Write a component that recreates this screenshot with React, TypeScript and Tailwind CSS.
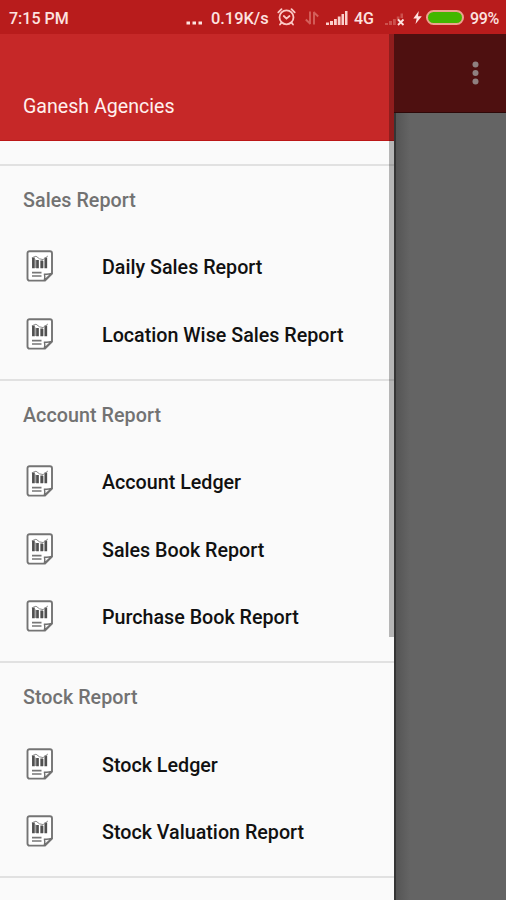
import React from 'react';

const sections = [
  { title: 'Sales Report', items: ['Daily Sales Report', 'Location Wise Sales Report'] },
  { title: 'Account Report', items: ['Account Ledger', 'Sales Book Report', 'Purchase Book Report'] },
  { title: 'Stock Report', items: ['Stock Ledger', 'Stock Valuation Report'] },
];

function ReportIcon() {
  return (
    <svg width="28" height="32" viewBox="0 0 28 32" fill="none" className="-mt-px shrink-0">
      <path d="M3.500 1.200H24a2 2 0 0 1 2 2v20.300l-7 7.100H3.500a2 2 0 0 1-2-2V3.200a2 2 0 0 1 2-2z" fill="#fff" stroke="#747474" strokeWidth="1.900" />
      <path d="M18.300 30.200c.8-2 .7-4 .1-6.100 2.400.4 4.600.2 7.200-.6z" fill="#f4f4f4" stroke="#707070" strokeWidth="1.400" strokeLinejoin="round" />
      <path d="M7.400 7.500v10.800M11.500 10v8.300M15.700 10.500v7.800M19.800 7.500v10.800" stroke="#505050" strokeWidth="2.700" />
      <path d="M9.500 9.500v8.500M17.800 11v7" stroke="#a5a5a5" strokeWidth="1" />
      <path d="M5.800 7.800L10 6.200l3.500 2.600 3.600.8 4.800-3.600" stroke="#8c8c8c" strokeWidth="1" />
      <path d="M6 22.600h9.500M6 26h9.500" stroke="#777" strokeWidth="1.600" />
    </svg>
  );
}

function AlarmIcon() {
  return (
    <svg width="20" height="20" viewBox="0 0 20 20" fill="none" stroke="#fbc9c5" strokeWidth="1.800" strokeLinecap="round">
      <circle cx="9.500" cy="10.300" r="7" />
      <path d="M1.300 5.300L4.500 2.200M17.700 5.300L14.500 2.200M4.500 15.700L3 17.500M14.500 15.700l1.500 1.800M6.800 9l2.700 2.600L12.500 9" />
    </svg>
  );
}

function SignalIcon() {
  return (
    <svg width="22" height="16" viewBox="0 0 22 16" fill="#fbd0cc">
      <path d="M0 12.500h3V15H0zM4 11h3v4H4zM8 9h2.800v6H8zM11.800 6.500h2.700V15h-2.700zM15.500 4h2.500v11h-2.500zM19 1h2.500v14H19z" />
    </svg>
  );
}

function StatusBar() {
  return (
    <div className="flex h-[34px] shrink-0 items-center bg-[#b81c1c] pt-[3px] pl-[9px] text-[16px] leading-none font-medium text-[#fde3e0]">
      <span className="w-[177px] whitespace-nowrap">7:15 PM</span>
      <svg width="18" height="16" viewBox="0 0 18 16" fill="#fde3e0">
        <path d="M.5 10.500H4v3H.5zM6.500 10.500H10v3H6.500zM12.500 10.500H16v3h-3.500z" />
      </svg>
      <span className="mt-px ml-[7px] w-[66px] text-[16.400px] whitespace-nowrap">0.19K/s</span>
      <div className="-mt-[3px] w-[28px]"><AlarmIcon /></div>
      <svg width="14" height="16" viewBox="0 0 14 16" fill="none" stroke="#d4605b" strokeWidth="1.900" className="-mt-px">
        <path d="M5 14V1.500M5.500 14L.8 9.500M9 2v12.500M8.500 2l4.700 4.500" />
      </svg>
      <div className="-mt-px ml-[7px]"><SignalIcon /></div>
      <span className="ml-[6px] w-[31px] text-[16px]">4G</span>
      <svg width="22" height="16" viewBox="0 0 22 16" className="-mt-px overflow-visible">
        <path d="M0 13h3v2H0zM4 11h3v4H4zM8 9h2.800v6H8zM11.800 6.500h2.700V10h-2.700zM15.500 3.500H18V8h-2.500z" fill="#cc514d" />
        <path d="M13 9.500l5.500 5.500M18.500 9.500L13 15" stroke="#fde3e0" strokeWidth="1.800" />
      </svg>
      <svg width="9" height="15" viewBox="0 0 9 15" fill="#fde3e0" className="-mt-[3px] ml-[6px]">
        <path d="M5.800 1L.3 8.500h3.400L2.500 14 8.800 6.200H5z" />
      </svg>
      <div className="-mt-[3px] ml-[4px] h-[15px] w-[38px] rounded-full border-2 border-[#eda18f] bg-[#42b700]" />
      <span className="ml-[6px] text-[16px] tracking-[-0.400px]">99%</span>
    </div>
  );
}

function Section({ title, items }: { title: string; items: string[] }) {
  return (
    <section className="border-t-2 border-[#e1e1e1] pb-[10.500px] font-medium">
      <h2 className="flex h-[67.500px] items-center pt-[3px] pl-[23px] text-[19.700px] tracking-[0.050px] text-[#727272]">{title}</h2>
      {items.map((item) => (
        <div key={item} className="flex h-[67.500px] items-center pl-[26px] text-[19.700px] text-[#111]">
          <ReportIcon />
          <span className="mt-[3px] ml-[48px] whitespace-nowrap">{item}</span>
        </div>
      ))}
    </section>
  );
}

export default function App() {
  return (
    <div className="flex h-[900px] w-[506px] flex-col overflow-hidden font-['Roboto',sans-serif]">
      <StatusBar />
      <div className="flex min-h-0 flex-1">
        <aside className="relative w-[394px] shrink-0 bg-[#fafafa]">
          <header className="flex h-[107px] items-end border-b border-[#bb1717] bg-[#c62828] pb-[20px] pl-[23px] text-[19.600px] leading-[26px] text-[#fff0ee]">
            Ganesh Agencies
          </header>
          <nav className="h-[759px] overflow-hidden pt-[22.500px]">
            {sections.map((section) => (
              <Section key={section.title} {...section} />
            ))}
            <div className="border-t-2 border-[#e1e1e1]" />
          </nav>
          {/* scroll thumb */}
          <div className="absolute top-0 right-0 h-[603px] w-[5px] bg-black/27" />
        </aside>
        <main className="flex flex-1 flex-col bg-[#646464]">
          <div className="flex h-[79px] items-center justify-end border-b border-[#2e0808] bg-[#4e1010] pr-[27px]">
            <svg width="7" height="24" viewBox="0 0 7 24" fill="#8f8080">
              <circle cx="3.500" cy="3.500" r="3" />
              <circle cx="3.500" cy="12" r="3" />
              <circle cx="3.500" cy="20.500" r="3" />
            </svg>
          </div>
          <div className="flex-1 border-l-2 border-[#353535]">
            <div className="h-full w-[14px] bg-linear-to-r from-[#555] to-[#646464]" />
          </div>
        </main>
      </div>
    </div>
  );
}
